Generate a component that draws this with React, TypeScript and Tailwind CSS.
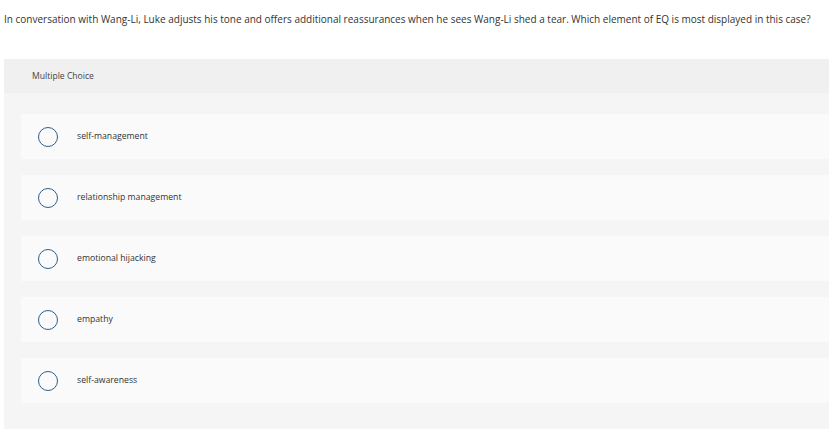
const options = [
  'self-management',
  'relationship management',
  'emotional hijacking',
  'empathy',
  'self-awareness',
]

export default function App() {
  return (
    <div className="h-[429px] w-[829px] overflow-hidden bg-white font-['Open_Sans',sans-serif] text-[#333]">
      <p className="pl-[4px] pt-[12px] text-[10px] leading-[14px] text-[#333]">
        In conversation with Wang-Li, Luke adjusts his tone and offers additional reassurances when he sees Wang-Li shed a tear. Which element of EQ is most displayed in this case?
      </p>

      <div className="ml-[4px] mt-[33px] bg-[#f5f5f5]">
        <div className="flex h-[34px] items-center bg-[#f0f0f0] pl-[28px] text-[8.6px] text-[#444]">
          Multiple Choice
        </div>

        <div className="flex flex-col gap-[16px] pl-[17px] pt-[21px] pb-[30px]">
          {options.map((opt) => (
            <div key={opt} className="flex h-[45px] items-center bg-[#fafafa]">
              <span className="ml-[17px] h-[20px] w-[20px] shrink-0 rounded-full border-[1.5px] border-[#2f5d8c]" />
              <span className="ml-[19px] text-[8.7px] text-[#333]">{opt}</span>
            </div>
          ))}
        </div>
      </div>
    </div>
  )
}
